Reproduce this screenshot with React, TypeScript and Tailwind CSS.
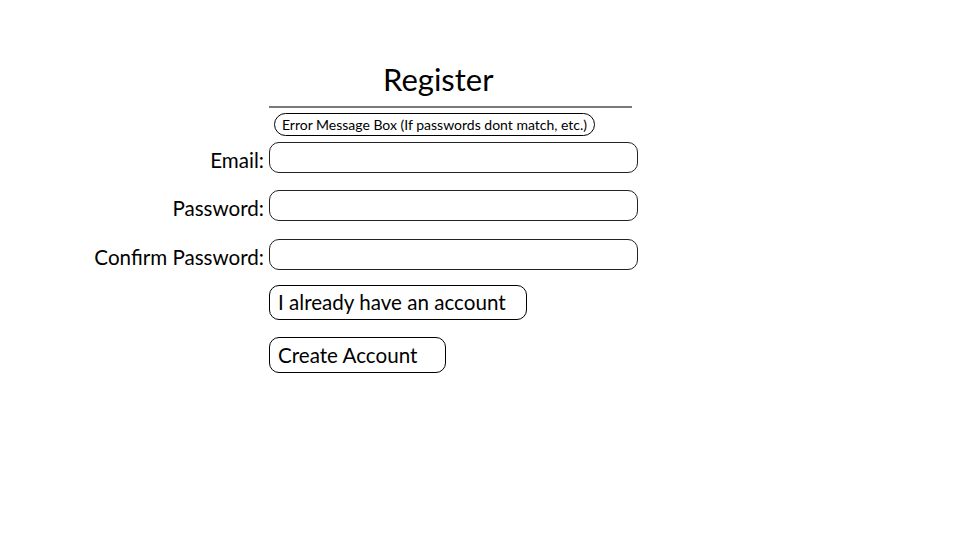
const font = { fontFamily: '"Lato", "Open Sans", sans-serif' };

function Field({ label, className = '' }: { label: string; className?: string }) {
  return (
    <div className={`flex h-[31px] items-center ${className}`}>
      <div className="w-[264px] pt-[5px] text-right text-[20.6px] leading-none text-black">{label}</div>
      <div className="ml-[5px] h-[31px] w-[369px] rounded-[10px] border-[1.5px] border-[#222]" />
    </div>
  );
}

export default function App() {
  return (
    <div className="h-[560px] w-[960px] bg-white text-black" style={font}>
      <div className="flex flex-col pt-[60px]">
        <div className="flex h-[38px]">
          <div className="w-[383px]" />
          <h1 className="text-[31px] leading-[38px] font-normal">Register</h1>
        </div>
        <div className="ml-[269px] mt-[8px] h-[2px] w-[363px] bg-[#7a7a7a]" />
        <div className="ml-[274px] mt-[5px] flex h-[23px] w-[321px] items-center justify-center rounded-full border-[1.5px] border-black text-[14px] leading-none">
          Error Message Box (If passwords dont match, etc.)
        </div>
        <div className="mt-[6px] flex flex-col">
          <Field label="Email:" />
          <Field label="Password:" className="mt-[17px]" />
          <Field label="Confirm Password:" className="mt-[18px]" />
        </div>
        <div className="ml-[269px] mt-[15px] flex flex-col items-start gap-[17px]">
          <button className="flex h-[35px] w-[258px] items-center rounded-[10px] border-[1.5px] border-black pl-[8px] text-[20.6px] leading-none">
            I already have an account
          </button>
          <button className="flex h-[36px] w-[177px] items-center rounded-[10px] border-[1.5px] border-black pl-[8px] text-[20.6px] leading-none">
            Create Account
          </button>
        </div>
      </div>
    </div>
  );
}
